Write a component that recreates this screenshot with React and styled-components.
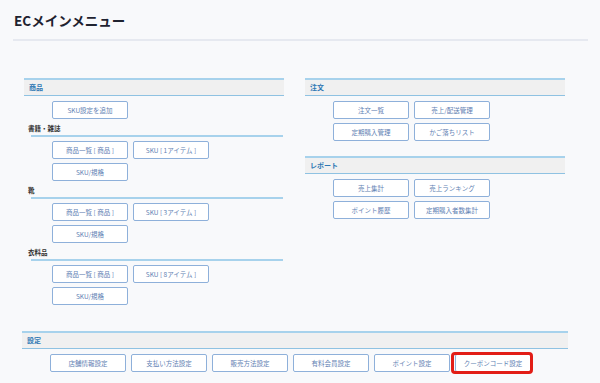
import styled, { createGlobalStyle, css } from "styled-components";

const GlobalStyle = createGlobalStyle`
  html, body {
    margin: 0;
    padding: 0;
    background: #f8f9fb;
  }
  body {
    font-family: "Noto Sans CJK JP", "Noto Sans", "Liberation Sans", sans-serif;
    color: #333;
  }
`;

const product = [
  { label: null, rows: [["SKU設定を追加"]] },
  {
    label: "書籍・雑誌",
    rows: [["商品一覧 [ 商品 ]", "SKU [ 1アイテム ]"], ["SKU/規格"]],
  },
  {
    label: "靴",
    rows: [["商品一覧 [ 商品 ]", "SKU [ 3アイテム ]"], ["SKU/規格"]],
  },
  {
    label: "衣料品",
    rows: [["商品一覧 [ 商品 ]", "SKU [ 8アイテム ]"], ["SKU/規格"]],
  },
];

const orders = [
  ["注文一覧", "売上/配送管理"],
  ["定期購入管理", "かご落ちリスト"],
];

const reports = [
  ["売上集計", "売上ランキング"],
  ["ポイント履歴", "定期購入者数集計"],
];

const settings = [
  "店舗情報設定",
  "支払い方法設定",
  "販売方法設定",
  "有料会員設定",
  "ポイント設定",
  "クーポンコード設定",
];

export default function App() {
  return (
    <Page>
      <GlobalStyle />
      <Title>ECメインメニュー</Title>
      <Content>
        <Columns>
          <Column>
            <Section>
              <Header>商品</Header>
              {product.map((group, i) => (
                <div key={i}>
                  {group.label && (
                    <>
                      <SubLabel>{group.label}</SubLabel>
                      <SubRule />
                    </>
                  )}
                  <Rows $first={!group.label}>
                    {group.rows.map((row, j) => (
                      <Row key={j}>
                        {row.map((b) => (
                          <Button key={b}>{b}</Button>
                        ))}
                      </Row>
                    ))}
                  </Rows>
                </div>
              ))}
            </Section>
          </Column>
          <Column>
            <Section $gap>
              <Header>注文</Header>
              <Rows $first>
                {orders.map((row, j) => (
                  <Row key={j}>
                    {row.map((b) => (
                      <Button key={b}>{b}</Button>
                    ))}
                  </Row>
                ))}
              </Rows>
            </Section>
            <Section>
              <Header>レポート</Header>
              <Rows $first>
                {reports.map((row, j) => (
                  <Row key={j}>
                    {row.map((b) => (
                      <Button key={b}>{b}</Button>
                    ))}
                  </Row>
                ))}
              </Rows>
            </Section>
          </Column>
        </Columns>
        <Bottom>
          <Header>設定</Header>
          <Rows $first>
            <Row>
              {settings.map((b) => (
                <Button key={b} $highlight={b === "クーポンコード設定"}>
                  {b}
                </Button>
              ))}
            </Row>
          </Rows>
        </Bottom>
      </Content>
    </Page>
  );
}

const Page = styled.div`
  width: 600px;
  height: 383px;
  overflow: hidden;
  box-sizing: border-box;
  padding: 0 12px 0 13px;
`;

const Title = styled.h1`
  margin: 0;
  padding: 10px 0 9px 1px;
  font-size: 13.5px;
  line-height: 20px;
  font-weight: 700;
  color: #1f2330;
  border-bottom: 2px solid #e6e9f0;
`;

const Content = styled.div`
  margin: 37px 0 0 9px;
  width: 546px;
`;

const Columns = styled.div`
  display: flex;
  justify-content: space-between;
  padding: 0 3px 0 2px;
`;

const Column = styled.div`
  width: 260px;
  display: flex;
  flex-direction: column;
`;

const Section = styled.div`
  margin-bottom: ${(p) => (p.$gap ? "15px" : "0")};
`;

const Header = styled.div`
  box-sizing: border-box;
  height: 18px;
  padding-left: 5px;
  background: #f0f0f0;
  border-top: 2px solid #a7d2ec;
  border-bottom: 1px solid #8fc2e2;
  font-size: 7px;
  font-weight: 700;
  line-height: 15px;
  color: #2f78b4;
`;

const SubLabel = styled.div`
  margin: 4px 0 0 4px;
  font-size: 6.5px;
  font-weight: 700;
  line-height: 11px;
  color: #333;
`;

const SubRule = styled.div`
  height: 2px;
  margin: 1px 1px 4px 7px;
  background: #a7d2ec;
`;

const Rows = styled.div`
  display: flex;
  flex-direction: column;
  gap: 4px;
  padding-left: 28px;
  ${(p) =>
    p.$first &&
    css`
      margin-top: 5px;
    `}
`;

const Row = styled.div`
  display: flex;
  gap: 5px;
`;

const Button = styled.div`
  position: relative;
  box-sizing: border-box;
  width: 76px;
  height: 18px;
  background: #fff;
  border: 1px solid #8eb0da;
  border-radius: 2px;
  font-size: 6.5px;
  line-height: 16px;
  text-align: center;
  color: #5f81b3;
  white-space: nowrap;
  ${(p) =>
    p.$highlight &&
    css`
      &::after {
        content: "";
        position: absolute;
        top: -3px;
        bottom: -3px;
        left: -5px;
        right: -3px;
        border: 3px solid #e21d16;
        border-radius: 4px;
      }
    `}
`;

const Bottom = styled.div`
  margin-top: 26px;
`;
